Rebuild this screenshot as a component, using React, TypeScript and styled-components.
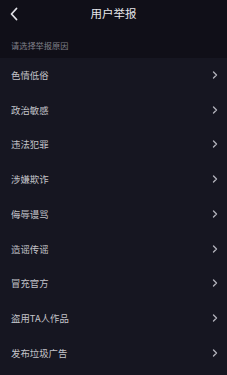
import React from "react";
import styled, { createGlobalStyle } from "styled-components";

const Global = createGlobalStyle`
  html, body { margin: 0; padding: 0; background: #161621; }
  body { font-family: "Noto Sans CJK SC", "Noto Sans", sans-serif; }
`;

const Page = styled.div`
  width: 227px;
  height: 375px;
  display: flex;
  flex-direction: column;
  background: #161621;
  overflow: hidden;
`;

const Top = styled.div`
  background: #100f18;
  display: flex;
  flex-direction: column;
  height: 57.6px;
`;

const NavBar = styled.div`
  height: 28px;
  display: flex;
  align-items: center;
  justify-content: center;
  position: relative;
`;

const Back = styled.div`
  position: absolute;
  left: 9px;
  top: 7px;
  width: 10px;
  height: 14px;
  display: flex;
`;

const Title = styled.div`
  font-size: 11.5px;
  color: #e6e6ea;
  letter-spacing: 0px;
  line-height: 1;
`;

const Hint = styled.div`
  flex: 1;
  display: flex;
  align-items: center;
  padding-left: 11px;
  padding-top: 5px;
  font-size: 8.2px;
  color: #80808a;
`;

const List = styled.div`
  display: flex;
  flex-direction: column;
`;

const Row = styled.div`
  height: 34.75px;
  display: flex;
  align-items: center;
  justify-content: space-between;
  padding: 0 9px 0 11px;
`;

const Label = styled.span`
  font-size: 9.4px;
  color: #c4c4ca;
`;

const Chevron = () => (
  <svg width="6" height="8" viewBox="0 0 6 8">
    <path d="M1.5 1 L4.5 4 L1.5 7" fill="none" stroke="#b0b0b8" strokeWidth="1.4" strokeLinecap="round" strokeLinejoin="round" />
  </svg>
);

const items = ["色情低俗", "政治敏感", "违法犯罪", "涉嫌欺诈", "侮辱谩骂", "造谣传谣", "冒充官方", "盗用TA人作品", "发布垃圾广告"];

export default function App() {
  return (
    <Page>
      <Global />
      <Top>
        <NavBar>
          <Back>
            <svg width="10" height="14" viewBox="0 0 10 14">
              <path d="M7.5 1.5 L2.5 7 L7.5 12.5" fill="none" stroke="#e0e0e6" strokeWidth="1.8" strokeLinecap="round" strokeLinejoin="round" />
            </svg>
          </Back>
          <Title>用户举报</Title>
        </NavBar>
        <Hint>请选择举报原因</Hint>
      </Top>
      <List>
        {items.map((t) => (
          <Row key={t}>
            <Label>{t}</Label>
            <Chevron />
          </Row>
        ))}
      </List>
    </Page>
  );
}
